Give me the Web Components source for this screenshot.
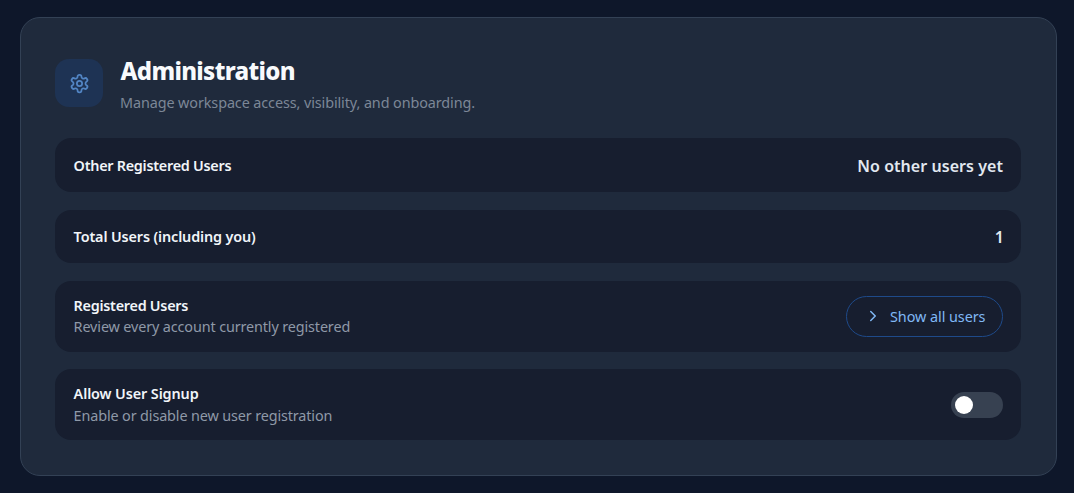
<!DOCTYPE html>
<html lang="en">
<head>
<meta charset="utf-8">
<title>Administration</title>
<style>
    html, body { margin: 0; height: 100%; }
    body {
        background: #0e172a;
        font-family: "Noto Sans", "Open Sans", sans-serif;
        overflow: hidden;
    }
</style>
</head>
<body>
<admin-panel heading="Administration" subtitle="Manage workspace access, visibility, and onboarding.">
    <admin-row label="Other Registered Users" style="--label-spacing: -0.27px">
        <span slot="action" class="value">No other users yet</span>
    </admin-row>
    <admin-row label="Total Users (including you)" style="--label-spacing: -0.13px">
        <span slot="action" class="value" style="margin-right: -1px">1</span>
    </admin-row>
    <admin-row label="Registered Users" description="Review every account currently registered" style="--label-spacing: -0.27px">
        <expand-button slot="action">Show all users</expand-button>
    </admin-row>
    <admin-row label="Allow User Signup" description="Enable or disable new user registration" style="--label-spacing: -0.1px; --description-gap: 2px">
        <toggle-switch slot="action"></toggle-switch>
    </admin-row>
</admin-panel>

<script>
// panel wrapper with the header
class AdminPanel extends HTMLElement {
    constructor() {
        super();
        this.attachShadow({mode: 'open'});
    }

    connectedCallback() {
        const heading = this.getAttribute('heading');
        const subtitle = this.getAttribute('subtitle');

        this.shadowRoot.innerHTML = `
            <style>
                :host {
                    display: block;
                    box-sizing: border-box;
                    margin: 17px 17px 17px 20px;
                    padding: 34px 35px 35px 34px;
                    background: #1f2a3c;
                    border: 1px solid #334155;
                    border-radius: 20px;
                }
                header {
                    display: flex;
                    align-items: flex-start;
                    gap: 17px;
                    height: 58px;
                    margin: 3px 0 25.4px;
                }
                .icon {
                    width: 48px;
                    height: 48px;
                    flex: none;
                    margin-top: 4px;
                    display: flex;
                    align-items: center;
                    justify-content: center;
                    background: #1e3354;
                    border-radius: 14px;
                    color: #5285c4;
                }
                h2 {
                    margin: 0 0 0 0.5px;
                    font-size: 24px;
                    line-height: 32px;
                    font-weight: 800;
                    letter-spacing: -0.68px;
                    color: #f8fafc;
                }
                p {
                    margin: 6px 0 0;
                    font-size: 14.4px;
                    line-height: 20px;
                    letter-spacing: -0.1px;
                    color: #7c8797;
                }
                .rows {
                    display: flex;
                    flex-direction: column;
                    gap: 17.6px;
                }
            </style>
            <header>
                <div class="icon">
                    <svg width="21" height="21" viewBox="0 0 24 24" fill="none" stroke="currentColor" stroke-width="2" stroke-linecap="round" stroke-linejoin="round">
                        <path d="M12.22 2h-.44a2 2 0 0 0-2 2v.18a2 2 0 0 1-1 1.73l-.43.25a2 2 0 0 1-2 0l-.15-.08a2 2 0 0 0-2.73.73l-.22.38a2 2 0 0 0 .73 2.73l.15.1a2 2 0 0 1 1 1.72v.51a2 2 0 0 1-1 1.74l-.15.09a2 2 0 0 0-.73 2.73l.22.38a2 2 0 0 0 2.73.73l.15-.08a2 2 0 0 1 2 0l.43.25a2 2 0 0 1 1 1.73V20a2 2 0 0 0 2 2h.44a2 2 0 0 0 2-2v-.18a2 2 0 0 1 1-1.73l.43-.25a2 2 0 0 1 2 0l.15.08a2 2 0 0 0 2.73-.73l.22-.39a2 2 0 0 0-.73-2.73l-.15-.08a2 2 0 0 1-1-1.74v-.5a2 2 0 0 1 1-1.74l.15-.09a2 2 0 0 0 .73-2.73l-.22-.38a2 2 0 0 0-2.73-.73l-.15.08a2 2 0 0 1-2 0l-.43-.25a2 2 0 0 1-1-1.73V4a2 2 0 0 0-2-2z"/>
                        <circle cx="12" cy="12" r="3"/>
                    </svg>
                </div>
                <div>
                    <h2>${heading}</h2>
                    <p>${subtitle}</p>
                </div>
            </header>
            <div class="rows"><slot></slot></div>
        `;
    }
}
customElements.define('admin-panel', AdminPanel);

// one dark row: label on the left, slotted thing on the right
class AdminRow extends HTMLElement {
    constructor() {
        super();
        this.attachShadow({mode: 'open'});
    }

    connectedCallback() {
        const label = this.getAttribute('label');
        const description = this.getAttribute('description');
        const tall = description ? 'tall' : '';

        this.shadowRoot.innerHTML = `
            <style>
                :host {
                    display: block;
                }
                .row {
                    display: flex;
                    align-items: center;
                    justify-content: space-between;
                    box-sizing: border-box;
                    height: 53.6px;
                    padding: 1.2px 18px 0 18.6px;
                    background: #171e2f;
                    border-radius: 16px;
                }
                .row.tall {
                    height: 71px;
                    padding-top: 0;
                }
                .label {
                    font-size: 14.4px;
                    line-height: 20px;
                    font-weight: 600;
                    letter-spacing: var(--label-spacing, 0);
                    color: #f1f5f9;
                }
                .description {
                    font-size: 14.4px;
                    line-height: 20px;
                    letter-spacing: -0.13px;
                    color: #8f99a8;
                    margin-top: var(--description-gap, 1.25px);
                }
                ::slotted(.value) {
                    font-size: 16px;
                    font-weight: 600;
                    letter-spacing: 0.05px;
                    color: #e2e8f0;
                }
            </style>
            <div class="row ${tall}">
                <div>
                    <div class="label">${label}</div>
                    ${description ? `<div class="description">${description}</div>` : ''}
                </div>
                <slot name="action"></slot>
            </div>
        `;
    }
}
customElements.define('admin-row', AdminRow);

class ExpandButton extends HTMLElement {
    constructor() {
        super();
        this.attachShadow({mode: 'open'});
    }

    connectedCallback() {
        this.shadowRoot.innerHTML = `
            <style>
                :host {
                    display: block;
                }
                button {
                    display: flex;
                    align-items: center;
                    gap: 8.5px;
                    box-sizing: border-box;
                    width: 157px;
                    height: 41px;
                    padding: 0 0 0 16.5px;
                    background: transparent;
                    border: 1px solid #1e4a8a;
                    border-radius: 20.5px;
                    font: inherit;
                    font-size: 14.4px;
                    letter-spacing: -0.06px;
                    color: #80b8f5;
                    cursor: pointer;
                }
            </style>
            <button type="button">
                <svg width="18" height="18" viewBox="0 0 24 24" fill="none" stroke="currentColor" stroke-width="2" stroke-linecap="round" stroke-linejoin="round">
                    <path d="m9 18 6-6-6-6"/>
                </svg>
                <slot></slot>
            </button>
        `;
    }
}
customElements.define('expand-button', ExpandButton);

class ToggleSwitch extends HTMLElement {
    constructor() {
        super();
        this.attachShadow({mode: 'open'});
    }

    connectedCallback() {
        this.shadowRoot.innerHTML = `
            <style>
                :host {
                    display: flex;
                    align-items: center;
                    box-sizing: border-box;
                    width: 52px;
                    height: 26px;
                    padding: 0 4px;
                    background: #374151;
                    border-radius: 13px;
                }
                .knob {
                    width: 18px;
                    height: 18px;
                    background: #fff;
                    border-radius: 50%;
                }
            </style>
            <div class="knob"></div>
        `;
    }
}
customElements.define('toggle-switch', ToggleSwitch);
</script>
</body>
</html>
